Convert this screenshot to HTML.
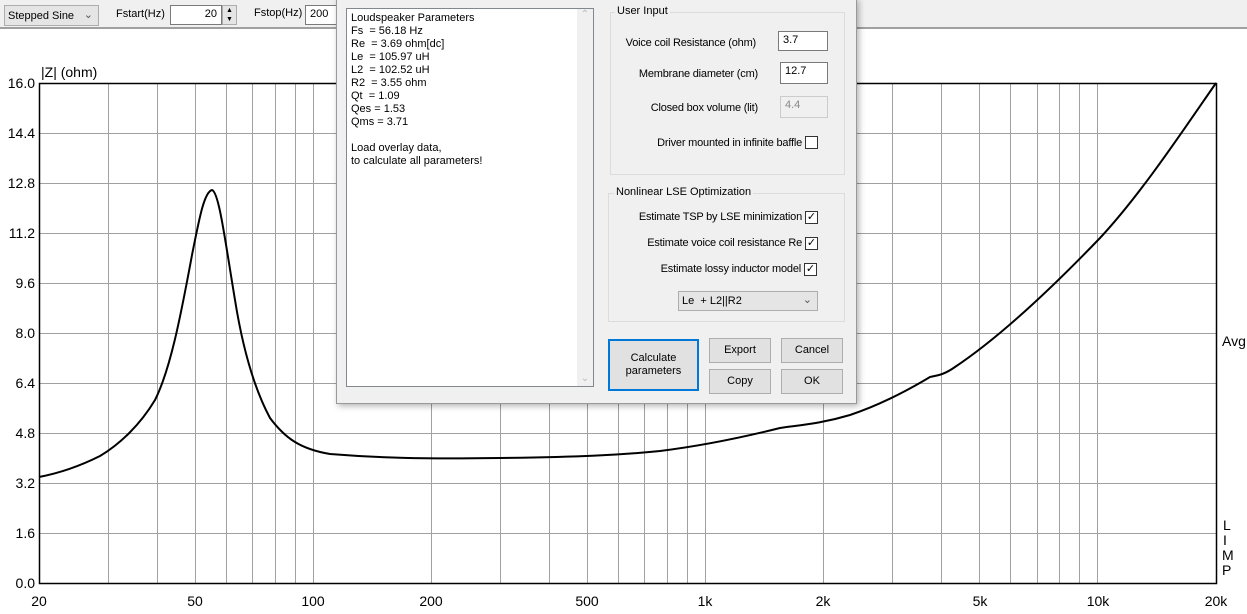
<!DOCTYPE html>
<html><head><style>
*{margin:0;padding:0;box-sizing:border-box}
body{width:1247px;height:614px;overflow:hidden;background:#fff;font-family:"Liberation Sans",Tahoma,sans-serif;position:relative}
.a{position:absolute}
.t{font-size:11px;color:#000;white-space:nowrap}
.r{position:absolute;font-size:11px;white-space:nowrap;text-align:right;letter-spacing:-0.2px}
.inp{position:absolute;background:#fff;border:1px solid #7a7a7a;font-size:11px;padding:2px 4px}
.btn{position:absolute;background:#e1e1e1;border:1px solid #adadad;font-size:11px;text-align:center}
.cb{position:absolute;width:13px;height:13px;border:1px solid #333;background:#fff}
.grp{position:absolute;border:1px solid #dcdcdc}
</style></head><body>
<div class="a" style="left:0;top:0;width:1247px;height:29px;background:#f0f0f0;border-bottom:2px solid #a0a0a0"></div>
<div class="a t" style="left:4px;top:5px;width:95px;height:21px;border:1px solid #adadad;background:#e5e5e5;padding:4px 3px">Stepped Sine<span style="position:absolute;right:5px;top:2px;color:#555">&#8964;</span></div>
<div class="a t" style="left:116px;top:8px">Fstart(Hz)</div>
<div class="inp" style="left:170px;top:5px;width:52px;height:20px;text-align:right">20</div>
<div class="a" style="left:222px;top:5px;width:15px;height:20px;border:1px solid #adadad;background:#e5e5e5;font-size:7px;line-height:9px;text-align:center">&#9650;<br>&#9660;</div>
<div class="a t" style="left:254px;top:7px">Fstop(Hz)</div>
<div class="inp" style="left:305px;top:5px;width:40px;height:20px">200</div>

<svg class="a" style="left:0;top:0" width="1247" height="614" xmlns="http://www.w3.org/2000/svg">
<g stroke="#a0a0a0" stroke-width="1">
<path d="M39 133.5H1216M39 183.5H1216M39 233.5H1216M39 283.5H1216M39 333.5H1216M39 383.5H1216M39 433.5H1216M39 483.5H1216M39 533.5H1216"/>
<path d="M108.5 83V583M157.5 83V583M195.5 83V583M226.5 83V583M252.5 83V583M275.5 83V583M295.5 83V583M313.5 83V583M431.5 83V583M500.5 83V583M549.5 83V583M587.5 83V583M618.5 83V583M644.5 83V583M667.5 83V583M687.5 83V583M705.5 83V583M823.5 83V583M892.5 83V583M941.5 83V583M979.5 83V583M1010.5 83V583M1037.5 83V583M1059.5 83V583M1079.5 83V583M1097.5 83V583"/>
</g>
<rect x="39.5" y="83.5" width="1177" height="500" fill="none" stroke="#000" stroke-width="1.5"/>
<path fill="none" stroke="#000" stroke-width="2" stroke-linejoin="round" d="M39 477 C60 473 80 466 100 456 C120 444 140 425 155 400 C170 370 180 320 192 255 C199 220 204 192 212 190 C219 192 225 240 235 300 C243 350 255 390 270 418 C285 438 300 449 330 454 C380 458 420 459 500 458 C580 457 620 455 660 451 C700 446 740 438 780 428 C800 425 820 424 850 415 C880 405 905 392 930 377 C940 375 945 374 955 367 C1000 337 1050 290 1100 238 C1140 195 1180 135 1216 83"/>
<g font-family="Liberation Sans,Arial,sans-serif" font-size="14" fill="#000">
<text x="41" y="77">|Z| (ohm)</text>
<g text-anchor="end">
<text x="35" y="88">16.0</text><text x="35" y="138">14.4</text><text x="35" y="188">12.8</text><text x="35" y="238">11.2</text><text x="35" y="288">9.6</text><text x="35" y="338">8.0</text><text x="35" y="388">6.4</text><text x="35" y="438">4.8</text><text x="35" y="488">3.2</text><text x="35" y="538">1.6</text><text x="35" y="588">0.0</text>
</g>
<g text-anchor="middle">
<text x="39" y="606">20</text><text x="195" y="606">50</text><text x="313" y="606">100</text><text x="431" y="606">200</text><text x="587" y="606">500</text><text x="705" y="606">1k</text><text x="823" y="606">2k</text><text x="980" y="606">5k</text><text x="1098" y="606">10k</text><text x="1216" y="606">20k</text>
</g>
<text x="1222" y="346">Avg</text>
<text x="1223" y="530">L</text><text x="1223" y="545">I</text><text x="1222" y="560">M</text><text x="1222" y="575">P</text>
</g>
</svg>

<div class="a" style="left:336px;top:-2px;width:521px;height:406px;background:#f0f0f0;border:1px solid #999;box-shadow:2px 2px 6px rgba(0,0,0,.3)"></div>
<div class="a" style="left:346px;top:8px;width:248px;height:379px;background:#fff;border:1px solid #828790"></div>
<div class="a" style="left:577px;top:9px;width:16px;height:377px;background:#f0f0f0;color:#bbb;font-size:10px;text-align:center">&#8963;<div style="position:absolute;bottom:2px;width:16px">&#8964;</div></div>
<div class="a t" style="left:351px;top:12px;line-height:13px">Loudspeaker Parameters<br>Fs&nbsp; = 56.18 Hz<br>Re&nbsp; = 3.69 ohm[dc]<br>Le&nbsp; = 105.97 uH<br>L2&nbsp; = 102.52 uH<br>R2&nbsp; = 3.55 ohm<br>Qt&nbsp; = 1.09<br>Qes = 1.53<br>Qms = 3.71<br><br>Load overlay data,<br>to calculate all parameters!</div>

<div class="grp" style="left:610px;top:12px;width:235px;height:163px"></div>
<div class="a t" style="left:615px;top:5px;background:#f0f0f0;padding:0 2px">User Input</div>
<div class="r" style="top:37px;right:491px">Voice coil Resistance (ohm)</div>
<div class="inp" style="left:778px;top:31px;width:50px;height:20px">3.7</div>
<div class="r" style="top:68px;right:489px">Membrane diameter (cm)</div>
<div class="inp" style="left:780px;top:62px;width:48px;height:22px">12.7</div>
<div class="r" style="top:102px;right:489px">Closed box volume (lit)</div>
<div class="inp" style="left:780px;top:96px;width:48px;height:22px;background:#f0f0f0;border-color:#ccc;color:#888">4.4</div>
<div class="r" style="top:137px;right:445px">Driver mounted in infinite baffle</div>
<div class="cb" style="left:805px;top:136px"></div>

<div class="grp" style="left:608px;top:193px;width:237px;height:129px"></div>
<div class="a t" style="left:614px;top:186px;background:#f0f0f0;padding:0 2px">Nonlinear LSE Optimization</div>
<div class="r" style="top:211px;right:445px">Estimate TSP by LSE minimization</div>
<div class="cb" style="left:805px;top:211px;font-size:11px;line-height:11px;text-align:center">&#10003;</div>
<div class="r" style="top:237px;right:445px">Estimate voice coil resistance Re</div>
<div class="cb" style="left:805px;top:237px;font-size:11px;line-height:11px;text-align:center">&#10003;</div>
<div class="r" style="top:263px;right:446px">Estimate lossy inductor model</div>
<div class="cb" style="left:804px;top:263px;font-size:11px;line-height:11px;text-align:center">&#10003;</div>
<div class="a t" style="left:678px;top:291px;width:140px;height:20px;background:#e5e5e5;border:1px solid #adadad;padding:3px 3px">Le&nbsp; + L2||R2<span style="position:absolute;right:5px;top:1px;color:#555">&#8964;</span></div>

<div class="btn" style="left:608px;top:339px;width:91px;height:52px;border:2px solid #0078d7;padding-top:11px;line-height:13px">Calculate<br>parameters</div>
<div class="btn" style="left:709px;top:338px;width:62px;height:25px;line-height:23px">Export</div>
<div class="btn" style="left:781px;top:338px;width:62px;height:25px;line-height:23px">Cancel</div>
<div class="btn" style="left:709px;top:369px;width:62px;height:25px;line-height:23px">Copy</div>
<div class="btn" style="left:781px;top:369px;width:62px;height:25px;line-height:23px">OK</div>
</body></html>
